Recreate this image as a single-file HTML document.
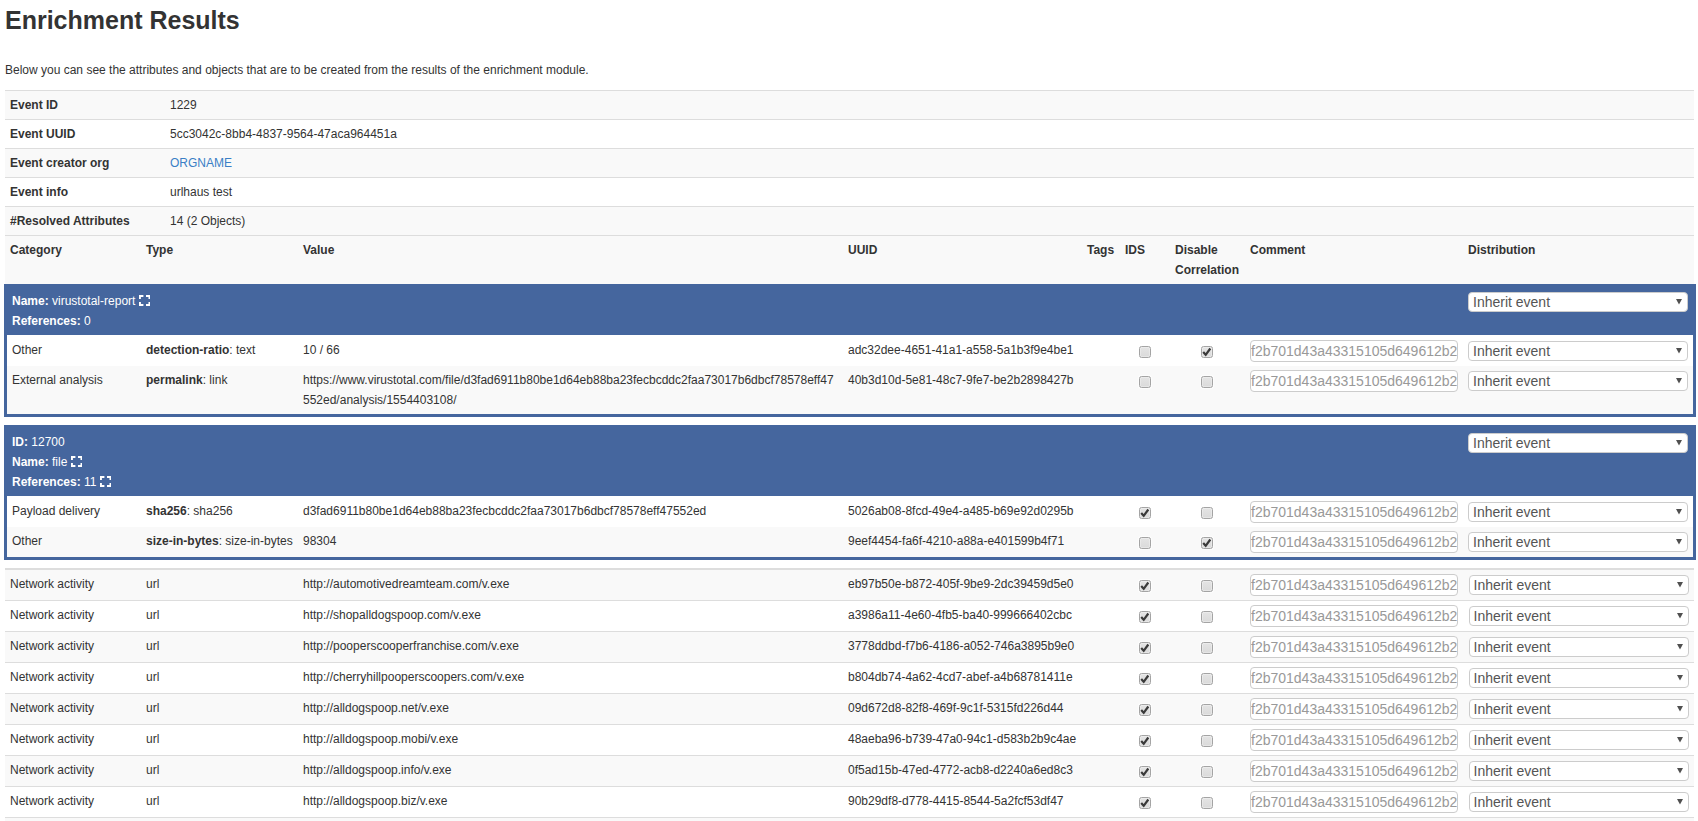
<!DOCTYPE html><html><head><meta charset="utf-8"><title>Enrichment Results</title><style>
html,body{margin:0;padding:0}
body{width:1698px;height:821px;overflow:hidden;position:relative;background:#fff;font-family:"Liberation Sans",sans-serif;font-size:12px;line-height:20px;color:#333}
.t,.h2,.r,.box,.cb,.inp,.sel{position:absolute}
.t{white-space:nowrap}
.w{color:#fff}
.h2{font-size:25px;font-weight:bold;line-height:30px;white-space:nowrap}
.box{left:4px;width:1692px;box-sizing:border-box;border:3px solid #45669e;background:#45669e}
.ex{vertical-align:-1px}
.cb{width:12px;height:12px;box-sizing:border-box;border:1px solid #a4a4a4;border-radius:2.5px;background:linear-gradient(#e4e4e4,#dadada);box-shadow:0 0 0 1px rgba(255,255,255,.7),inset 0 0 0 1px rgba(255,255,255,.3)}
.cb svg{position:absolute;left:-1px;top:-1px}
.inp{width:208px;height:22px;box-sizing:border-box;border:1px solid #ccc;border-radius:4px;background:#fff;overflow:hidden;font-size:14px;line-height:20px;color:#999}
.inp span{position:absolute;left:0px;top:0px;white-space:nowrap}
.sel{width:220px;height:20px;box-sizing:border-box;border:1px solid #ccc;border-radius:4px;background:#fff;font-size:14px;line-height:18px;color:#555}
.sel span{position:absolute;left:4px;top:0;white-space:nowrap}
.arr{position:absolute;right:5px;top:6px}
</style></head><body>
<div class="h2" style="left:5px;top:5px">Enrichment Results</div>
<div class="t" style="left:5px;top:60px;">Below you can see the attributes and objects that are to be created from the results of the enrichment module.</div>
<div class="r" style="left:5px;top:90px;width:1689px;height:1px;background:#ddd"></div>
<div class="r" style="left:5px;top:91px;width:1689px;height:28px;background:#f9f9f9"></div>
<div class="t" style="left:10px;top:95px;"><b>Event ID</b></div>
<div class="t" style="left:170px;top:95px;">1229</div>
<div class="r" style="left:5px;top:119px;width:1689px;height:1px;background:#ddd"></div>
<div class="t" style="left:10px;top:124px;"><b>Event UUID</b></div>
<div class="t" style="left:170px;top:124px;">5cc3042c-8bb4-4837-9564-47aca964451a</div>
<div class="r" style="left:5px;top:148px;width:1689px;height:1px;background:#ddd"></div>
<div class="r" style="left:5px;top:149px;width:1689px;height:28px;background:#f9f9f9"></div>
<div class="t" style="left:10px;top:153px;"><b>Event creator org</b></div>
<div class="t" style="left:170px;top:153px;"><span style="color:#3a7fc6">ORGNAME</span></div>
<div class="r" style="left:5px;top:177px;width:1689px;height:1px;background:#ddd"></div>
<div class="t" style="left:10px;top:182px;"><b>Event info</b></div>
<div class="t" style="left:170px;top:182px;">urlhaus test</div>
<div class="r" style="left:5px;top:206px;width:1689px;height:1px;background:#ddd"></div>
<div class="r" style="left:5px;top:207px;width:1689px;height:28px;background:#f9f9f9"></div>
<div class="t" style="left:10px;top:211px;"><b>#Resolved Attributes</b></div>
<div class="t" style="left:170px;top:211px;">14 (2 Objects)</div>
<div class="r" style="left:5px;top:235px;width:1689px;height:1px;background:#ddd"></div>
<div class="r" style="left:5px;top:236px;width:1689px;height:48px;background:#f9f9f9"></div>
<div class="t" style="left:10px;top:240px;"><b>Category</b></div>
<div class="t" style="left:146px;top:240px;"><b>Type</b></div>
<div class="t" style="left:303px;top:240px;"><b>Value</b></div>
<div class="t" style="left:848px;top:240px;"><b>UUID</b></div>
<div class="t" style="left:1087px;top:240px;"><b>Tags</b></div>
<div class="t" style="left:1125px;top:240px;"><b>IDS</b></div>
<div class="t" style="left:1175px;top:240px;"><b>Disable</b></div>
<div class="t" style="left:1250px;top:240px;"><b>Comment</b></div>
<div class="t" style="left:1468px;top:240px;"><b>Distribution</b></div>
<div class="t" style="left:1175px;top:260px;"><b>Correlation</b></div>
<div class="box" style="top:284px;height:133px"></div>
<div class="r" style="left:7px;top:335px;width:1686px;height:31px;background:#fff"></div>
<div class="r" style="left:7px;top:366px;width:1686px;height:48px;background:#f9f9f9"></div>
<div class="t w" style="left:12px;top:291px;"><b>Name:</b> virustotal-report <svg class="ex" width="11.4" height="11" viewBox="0 0 11.4 11"><path fill="#fff" d="M0 0h4.4v1.9H1.9v2.1H0z M7 0h4.4v4h-1.9V1.9H7z M0 7h1.9v2.1h2.5v1.9H0z M9.5 7h1.9v4H7V9.1h2.5z"/></svg></div>
<div class="t w" style="left:12px;top:311px;"><b>References:</b> 0</div>
<div class="sel" style="left:1468px;top:292px"><span>Inherit event</span><svg class="arr" width="6" height="6" viewBox="0 0 6 6"><path d="M0 0H6L3 5.4z" fill="#505050"/></svg></div>
<div class="t" style="left:12px;top:340px;">Other</div>
<div class="t" style="left:146px;top:340px;"><b>detection-ratio</b>: text</div>
<div class="t" style="left:303px;top:340px;">10 / 66</div>
<div class="t" style="left:848px;top:340px;">adc32dee-4651-41a1-a558-5a1b3f9e4be1</div>
<div class="cb" style="left:1139px;top:346px"></div>
<div class="cb" style="left:1201px;top:346px"><svg width="12" height="12" viewBox="0 0 12 12"><path d="M2.2 6.1 L4.7 8.8 L9.3 2.5" fill="none" stroke="#3a3a3a" stroke-width="2.2" stroke-linecap="butt" stroke-linejoin="miter"/></svg></div>
<div class="inp" style="left:1250px;top:340px"><span>f2b701d43a43315105d649612b2</span></div>
<div class="sel" style="left:1468px;top:341px"><span>Inherit event</span><svg class="arr" width="6" height="6" viewBox="0 0 6 6"><path d="M0 0H6L3 5.4z" fill="#505050"/></svg></div>
<div class="t" style="left:12px;top:370px;">External analysis</div>
<div class="t" style="left:146px;top:370px;"><b>permalink</b>: link</div>
<div class="t" style="left:303px;top:370px;">https://www.virustotal.com/file/d3fad6911b80be1d64eb88ba23fecbcddc2faa73017b6dbcf78578eff47</div>
<div class="t" style="left:303px;top:390px;">552ed/analysis/1554403108/</div>
<div class="t" style="left:848px;top:370px;">40b3d10d-5e81-48c7-9fe7-be2b2898427b</div>
<div class="cb" style="left:1139px;top:376px"></div>
<div class="cb" style="left:1201px;top:376px"></div>
<div class="inp" style="left:1250px;top:370px"><span>f2b701d43a43315105d649612b2</span></div>
<div class="sel" style="left:1468px;top:371px"><span>Inherit event</span><svg class="arr" width="6" height="6" viewBox="0 0 6 6"><path d="M0 0H6L3 5.4z" fill="#505050"/></svg></div>
<div class="box" style="top:425px;height:135px"></div>
<div class="r" style="left:7px;top:496px;width:1686px;height:31px;background:#fff"></div>
<div class="r" style="left:7px;top:527px;width:1686px;height:30px;background:#f9f9f9"></div>
<div class="t w" style="left:12px;top:432px;"><b>ID:</b> 12700</div>
<div class="t w" style="left:12px;top:452px;"><b>Name:</b> file <svg class="ex" width="11.4" height="11" viewBox="0 0 11.4 11"><path fill="#fff" d="M0 0h4.4v1.9H1.9v2.1H0z M7 0h4.4v4h-1.9V1.9H7z M0 7h1.9v2.1h2.5v1.9H0z M9.5 7h1.9v4H7V9.1h2.5z"/></svg></div>
<div class="t w" style="left:12px;top:472px;"><b>References:</b> 11 <svg class="ex" width="11.4" height="11" viewBox="0 0 11.4 11"><path fill="#fff" d="M0 0h4.4v1.9H1.9v2.1H0z M7 0h4.4v4h-1.9V1.9H7z M0 7h1.9v2.1h2.5v1.9H0z M9.5 7h1.9v4H7V9.1h2.5z"/></svg></div>
<div class="sel" style="left:1468px;top:433px"><span>Inherit event</span><svg class="arr" width="6" height="6" viewBox="0 0 6 6"><path d="M0 0H6L3 5.4z" fill="#505050"/></svg></div>
<div class="t" style="left:12px;top:501px;">Payload delivery</div>
<div class="t" style="left:146px;top:501px;"><b>sha256</b>: sha256</div>
<div class="t" style="left:303px;top:501px;">d3fad6911b80be1d64eb88ba23fecbcddc2faa73017b6dbcf78578eff47552ed</div>
<div class="t" style="left:848px;top:501px;">5026ab08-8fcd-49e4-a485-b69e92d0295b</div>
<div class="cb" style="left:1139px;top:507px"><svg width="12" height="12" viewBox="0 0 12 12"><path d="M2.2 6.1 L4.7 8.8 L9.3 2.5" fill="none" stroke="#3a3a3a" stroke-width="2.2" stroke-linecap="butt" stroke-linejoin="miter"/></svg></div>
<div class="cb" style="left:1201px;top:507px"></div>
<div class="inp" style="left:1250px;top:501px"><span>f2b701d43a43315105d649612b2</span></div>
<div class="sel" style="left:1468px;top:502px"><span>Inherit event</span><svg class="arr" width="6" height="6" viewBox="0 0 6 6"><path d="M0 0H6L3 5.4z" fill="#505050"/></svg></div>
<div class="t" style="left:12px;top:531px;">Other</div>
<div class="t" style="left:146px;top:531px;"><b>size-in-bytes</b>: size-in-bytes</div>
<div class="t" style="left:303px;top:531px;">98304</div>
<div class="t" style="left:848px;top:531px;">9eef4454-fa6f-4210-a88a-e401599b4f71</div>
<div class="cb" style="left:1139px;top:537px"></div>
<div class="cb" style="left:1201px;top:537px"><svg width="12" height="12" viewBox="0 0 12 12"><path d="M2.2 6.1 L4.7 8.8 L9.3 2.5" fill="none" stroke="#3a3a3a" stroke-width="2.2" stroke-linecap="butt" stroke-linejoin="miter"/></svg></div>
<div class="inp" style="left:1250px;top:531px"><span>f2b701d43a43315105d649612b2</span></div>
<div class="sel" style="left:1468px;top:532px"><span>Inherit event</span><svg class="arr" width="6" height="6" viewBox="0 0 6 6"><path d="M0 0H6L3 5.4z" fill="#505050"/></svg></div>
<div class="r" style="left:5px;top:568px;width:1689px;height:2px;background:#ddd"></div>
<div class="r" style="left:5px;top:570px;width:1689px;height:30px;background:#f9f9f9"></div>
<div class="t" style="left:10px;top:574px;">Network activity</div>
<div class="t" style="left:146px;top:574px;">url</div>
<div class="t" style="left:303px;top:574px;">http://automotivedreamteam.com/v.exe</div>
<div class="t" style="left:848px;top:574px;">eb97b50e-b872-405f-9be9-2dc39459d5e0</div>
<div class="cb" style="left:1139px;top:580px"><svg width="12" height="12" viewBox="0 0 12 12"><path d="M2.2 6.1 L4.7 8.8 L9.3 2.5" fill="none" stroke="#3a3a3a" stroke-width="2.2" stroke-linecap="butt" stroke-linejoin="miter"/></svg></div>
<div class="cb" style="left:1201px;top:580px"></div>
<div class="inp" style="left:1250px;top:574px"><span>f2b701d43a43315105d649612b2</span></div>
<div class="sel" style="left:1468.6px;top:575px"><span>Inherit event</span><svg class="arr" width="6" height="6" viewBox="0 0 6 6"><path d="M0 0H6L3 5.4z" fill="#505050"/></svg></div>
<div class="r" style="left:5px;top:600px;width:1689px;height:1px;background:#ddd"></div>
<div class="t" style="left:10px;top:605px;">Network activity</div>
<div class="t" style="left:146px;top:605px;">url</div>
<div class="t" style="left:303px;top:605px;">http://shopalldogspoop.com/v.exe</div>
<div class="t" style="left:848px;top:605px;">a3986a11-4e60-4fb5-ba40-999666402cbc</div>
<div class="cb" style="left:1139px;top:611px"><svg width="12" height="12" viewBox="0 0 12 12"><path d="M2.2 6.1 L4.7 8.8 L9.3 2.5" fill="none" stroke="#3a3a3a" stroke-width="2.2" stroke-linecap="butt" stroke-linejoin="miter"/></svg></div>
<div class="cb" style="left:1201px;top:611px"></div>
<div class="inp" style="left:1250px;top:605px"><span>f2b701d43a43315105d649612b2</span></div>
<div class="sel" style="left:1468.6px;top:606px"><span>Inherit event</span><svg class="arr" width="6" height="6" viewBox="0 0 6 6"><path d="M0 0H6L3 5.4z" fill="#505050"/></svg></div>
<div class="r" style="left:5px;top:631px;width:1689px;height:1px;background:#ddd"></div>
<div class="r" style="left:5px;top:632px;width:1689px;height:30px;background:#f9f9f9"></div>
<div class="t" style="left:10px;top:636px;">Network activity</div>
<div class="t" style="left:146px;top:636px;">url</div>
<div class="t" style="left:303px;top:636px;">http://pooperscooperfranchise.com/v.exe</div>
<div class="t" style="left:848px;top:636px;">3778ddbd-f7b6-4186-a052-746a3895b9e0</div>
<div class="cb" style="left:1139px;top:642px"><svg width="12" height="12" viewBox="0 0 12 12"><path d="M2.2 6.1 L4.7 8.8 L9.3 2.5" fill="none" stroke="#3a3a3a" stroke-width="2.2" stroke-linecap="butt" stroke-linejoin="miter"/></svg></div>
<div class="cb" style="left:1201px;top:642px"></div>
<div class="inp" style="left:1250px;top:636px"><span>f2b701d43a43315105d649612b2</span></div>
<div class="sel" style="left:1468.6px;top:637px"><span>Inherit event</span><svg class="arr" width="6" height="6" viewBox="0 0 6 6"><path d="M0 0H6L3 5.4z" fill="#505050"/></svg></div>
<div class="r" style="left:5px;top:662px;width:1689px;height:1px;background:#ddd"></div>
<div class="t" style="left:10px;top:667px;">Network activity</div>
<div class="t" style="left:146px;top:667px;">url</div>
<div class="t" style="left:303px;top:667px;">http://cherryhillpooperscoopers.com/v.exe</div>
<div class="t" style="left:848px;top:667px;">b804db74-4a62-4cd7-abef-a4b68781411e</div>
<div class="cb" style="left:1139px;top:673px"><svg width="12" height="12" viewBox="0 0 12 12"><path d="M2.2 6.1 L4.7 8.8 L9.3 2.5" fill="none" stroke="#3a3a3a" stroke-width="2.2" stroke-linecap="butt" stroke-linejoin="miter"/></svg></div>
<div class="cb" style="left:1201px;top:673px"></div>
<div class="inp" style="left:1250px;top:667px"><span>f2b701d43a43315105d649612b2</span></div>
<div class="sel" style="left:1468.6px;top:668px"><span>Inherit event</span><svg class="arr" width="6" height="6" viewBox="0 0 6 6"><path d="M0 0H6L3 5.4z" fill="#505050"/></svg></div>
<div class="r" style="left:5px;top:693px;width:1689px;height:1px;background:#ddd"></div>
<div class="r" style="left:5px;top:694px;width:1689px;height:30px;background:#f9f9f9"></div>
<div class="t" style="left:10px;top:698px;">Network activity</div>
<div class="t" style="left:146px;top:698px;">url</div>
<div class="t" style="left:303px;top:698px;">http://alldogspoop.net/v.exe</div>
<div class="t" style="left:848px;top:698px;">09d672d8-82f8-469f-9c1f-5315fd226d44</div>
<div class="cb" style="left:1139px;top:704px"><svg width="12" height="12" viewBox="0 0 12 12"><path d="M2.2 6.1 L4.7 8.8 L9.3 2.5" fill="none" stroke="#3a3a3a" stroke-width="2.2" stroke-linecap="butt" stroke-linejoin="miter"/></svg></div>
<div class="cb" style="left:1201px;top:704px"></div>
<div class="inp" style="left:1250px;top:698px"><span>f2b701d43a43315105d649612b2</span></div>
<div class="sel" style="left:1468.6px;top:699px"><span>Inherit event</span><svg class="arr" width="6" height="6" viewBox="0 0 6 6"><path d="M0 0H6L3 5.4z" fill="#505050"/></svg></div>
<div class="r" style="left:5px;top:724px;width:1689px;height:1px;background:#ddd"></div>
<div class="t" style="left:10px;top:729px;">Network activity</div>
<div class="t" style="left:146px;top:729px;">url</div>
<div class="t" style="left:303px;top:729px;">http://alldogspoop.mobi/v.exe</div>
<div class="t" style="left:848px;top:729px;">48aeba96-b739-47a0-94c1-d583b2b9c4ae</div>
<div class="cb" style="left:1139px;top:735px"><svg width="12" height="12" viewBox="0 0 12 12"><path d="M2.2 6.1 L4.7 8.8 L9.3 2.5" fill="none" stroke="#3a3a3a" stroke-width="2.2" stroke-linecap="butt" stroke-linejoin="miter"/></svg></div>
<div class="cb" style="left:1201px;top:735px"></div>
<div class="inp" style="left:1250px;top:729px"><span>f2b701d43a43315105d649612b2</span></div>
<div class="sel" style="left:1468.6px;top:730px"><span>Inherit event</span><svg class="arr" width="6" height="6" viewBox="0 0 6 6"><path d="M0 0H6L3 5.4z" fill="#505050"/></svg></div>
<div class="r" style="left:5px;top:755px;width:1689px;height:1px;background:#ddd"></div>
<div class="r" style="left:5px;top:756px;width:1689px;height:30px;background:#f9f9f9"></div>
<div class="t" style="left:10px;top:760px;">Network activity</div>
<div class="t" style="left:146px;top:760px;">url</div>
<div class="t" style="left:303px;top:760px;">http://alldogspoop.info/v.exe</div>
<div class="t" style="left:848px;top:760px;">0f5ad15b-47ed-4772-acb8-d2240a6ed8c3</div>
<div class="cb" style="left:1139px;top:766px"><svg width="12" height="12" viewBox="0 0 12 12"><path d="M2.2 6.1 L4.7 8.8 L9.3 2.5" fill="none" stroke="#3a3a3a" stroke-width="2.2" stroke-linecap="butt" stroke-linejoin="miter"/></svg></div>
<div class="cb" style="left:1201px;top:766px"></div>
<div class="inp" style="left:1250px;top:760px"><span>f2b701d43a43315105d649612b2</span></div>
<div class="sel" style="left:1468.6px;top:761px"><span>Inherit event</span><svg class="arr" width="6" height="6" viewBox="0 0 6 6"><path d="M0 0H6L3 5.4z" fill="#505050"/></svg></div>
<div class="r" style="left:5px;top:786px;width:1689px;height:1px;background:#ddd"></div>
<div class="t" style="left:10px;top:791px;">Network activity</div>
<div class="t" style="left:146px;top:791px;">url</div>
<div class="t" style="left:303px;top:791px;">http://alldogspoop.biz/v.exe</div>
<div class="t" style="left:848px;top:791px;">90b29df8-d778-4415-8544-5a2fcf53df47</div>
<div class="cb" style="left:1139px;top:797px"><svg width="12" height="12" viewBox="0 0 12 12"><path d="M2.2 6.1 L4.7 8.8 L9.3 2.5" fill="none" stroke="#3a3a3a" stroke-width="2.2" stroke-linecap="butt" stroke-linejoin="miter"/></svg></div>
<div class="cb" style="left:1201px;top:797px"></div>
<div class="inp" style="left:1250px;top:791px"><span>f2b701d43a43315105d649612b2</span></div>
<div class="sel" style="left:1468.6px;top:792px"><span>Inherit event</span><svg class="arr" width="6" height="6" viewBox="0 0 6 6"><path d="M0 0H6L3 5.4z" fill="#505050"/></svg></div>
<div class="r" style="left:5px;top:817px;width:1689px;height:1px;background:#ddd"></div>
<div class="r" style="left:5px;top:818px;width:1689px;height:10px;background:#f9f9f9"></div>
</body></html>
